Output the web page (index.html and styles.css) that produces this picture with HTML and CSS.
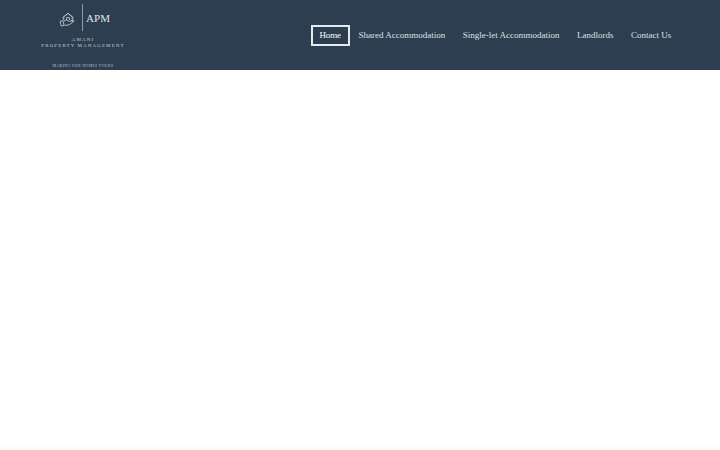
FILE: index.html
```html
<!DOCTYPE html>
<html lang="en">
<head>
  <meta charset="UTF-8">
  <meta name="viewport" content="width=device-width, initial-scale=1.0">
  <title>Amani Property Management</title>
  <link rel="stylesheet" href="styles.css">
</head>
<body>
  <header class="topbar">
    <a class="logo" href="#">
      <div class="logo-mark">
        <svg class="logo-icon" viewBox="0 0 18 16">
          <path d="M1 9.500l3-1 1.500 5-3 1zM5 9l3-1 3 1.500 4-1.500 1 1-5 4-5 .8" />
          <path d="M5 8V4.500L9.500 1 14 4.500V10M3.500 6L9.500 1 15.500 6M8 8V5.500h3V8" />
        </svg>
        <span class="logo-bar"></span>
        <span class="logo-apm">APM</span>
      </div>
      <div class="logo-name">AMANI</div>
      <div class="logo-name">PROPERTY MANAGEMENT</div>
      <div class="logo-tag">MAKING OUR HOMES YOURS</div>
    </a>
    <nav class="menu">
      <a class="active" href="#">Home</a>
      <a href="#">Shared Accommodation</a>
      <a href="#">Single-let Accommodation</a>
      <a href="#">Landlords</a>
      <a href="#">Contact Us</a>
    </nav>
  </header>
  <main class="content"></main>
  <div class="page-fade"></div>
</body>
</html>
```

FILE: styles.css
```css
html, body {
  height: 100%;
}
body {
  margin: 0;
  display: flex;
  flex-direction: column;
  overflow: hidden;
  background: #fff;
  font-family: "Liberation Serif", serif;
}
.topbar {
  height: 70px;
  flex-shrink: 0;
  display: flex;
  justify-content: space-between;
  align-items: center;
  padding: 0 40px 0 41px;
  background: #2c3e50;
}
.logo {
  width: 84px;
  height: 70px;
  display: flex;
  flex-direction: column;
  align-items: center;
  color: #c9d1d8;
  text-decoration: none;
}
.logo-mark {
  height: 29px;
  margin: 3px 0 5px 3px;
  display: flex;
  align-items: center;
}
.logo-icon {
  width: 17px;
  height: 16px;
  margin: 4px 6px 0 0;
  fill: none;
  stroke: #b9c2ca;
  stroke-width: 1;
}
.logo-bar {
  width: 1px;
  height: 27px;
  margin-right: 3px;
  background: #8e9aa5;
}
.logo-apm {
  font-size: 11px;
  color: #dfe4e8;
}
.logo-name {
  font-size: 5px;
  line-height: 6px;
  letter-spacing: 1.100px;
  white-space: nowrap;
}
.logo-tag {
  margin-top: 14px;
  font-size: 4px;
  line-height: 5px;
  letter-spacing: 0.250px;
  white-space: nowrap;
  color: #b6bfc7;
}
.menu {
  display: flex;
  align-items: center;
  margin-top: 1px;
}
.menu a {
  padding: 2px 6.750px;
  border: 2px solid transparent;
  color: #dde2e7;
  font-size: 9px;
  line-height: 13px;
  white-space: nowrap;
  text-decoration: none;
}
.menu a.active {
  border-color: #e6ebef;
  color: #fff;
  letter-spacing: -0.100px;
}
.content {
  flex: 1;
}
.page-fade {
  height: 5px;
  flex-shrink: 0;
  background: linear-gradient(#fff, #f9f9f9);
}
```
